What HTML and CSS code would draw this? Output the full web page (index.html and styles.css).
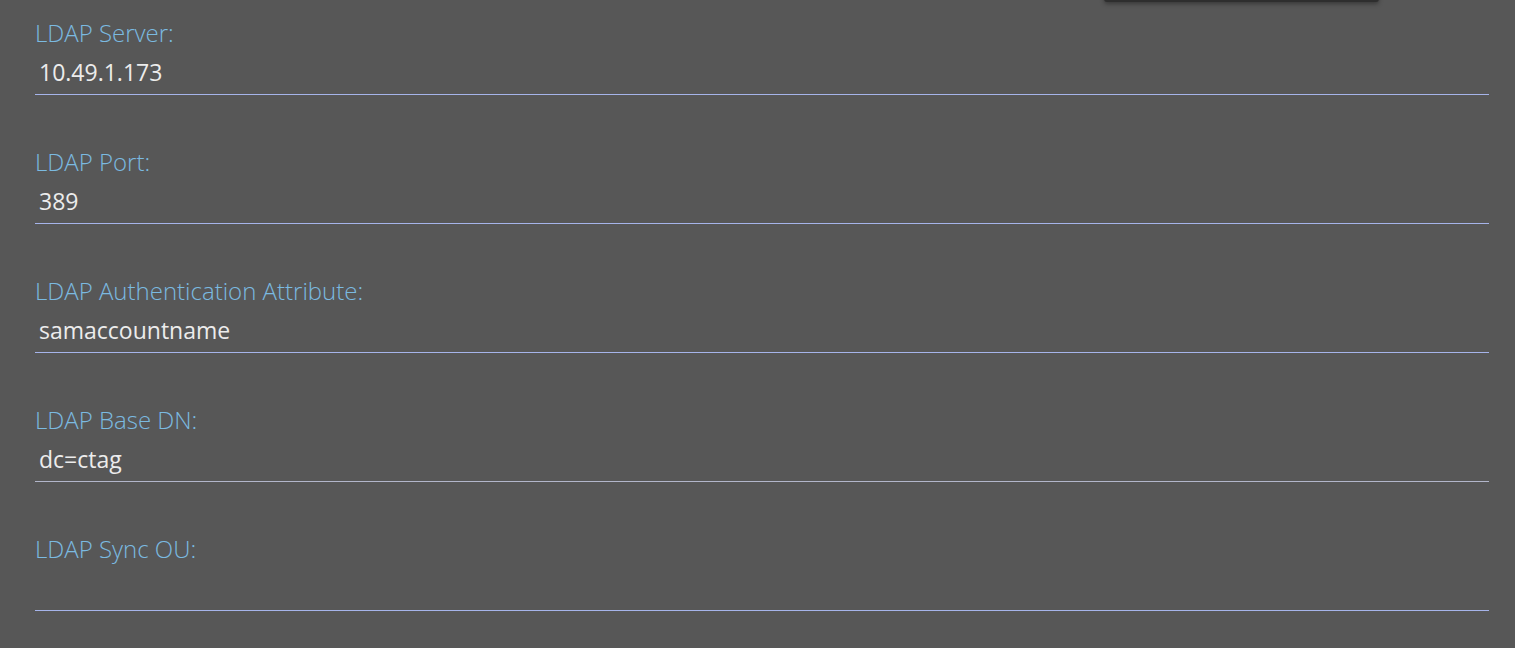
FILE: index.html
```html
<!DOCTYPE html>
<html>
<head>
<meta charset="utf-8">
<link rel="stylesheet" href="styles.css">
</head>
<body>
<div class="menu-edge"></div>
<form class="form">
  <div class="field">
    <label class="label">LDAP Server:</label>
    <div class="input">10.49.1.173</div>
  </div>
  <div class="field">
    <label class="label">LDAP Port:</label>
    <div class="input">389</div>
  </div>
  <div class="field">
    <label class="label">LDAP Authentication Attribute:</label>
    <div class="input">samaccountname</div>
  </div>
  <div class="field">
    <label class="label">LDAP Base DN:</label>
    <div class="input input-muted">dc=ctag</div>
  </div>
  <div class="field">
    <label class="label">LDAP Sync OU:</label>
    <div class="input"></div>
  </div>
</form>
</body>
</html>
```

FILE: styles.css
```css
html, body {
  margin: 0;
  padding: 0;
  background: #575757;
  height: 100%;
  overflow: hidden;
}
body {
  font-family: "Open Sans", "Liberation Sans", sans-serif;
  position: relative;
}
.menu-edge {
  position: absolute;
  left: 1104px;
  top: -40px;
  width: 275px;
  height: 42px;
  background: #2e2e2e;
  border-radius: 3px;
  box-shadow: 0 2px 4px rgba(0,0,0,0.35);
}
.form {
  display: flex;
  flex-direction: column;
  gap: 51px;
  padding: 17px 26px 0 35px;
}
.field {
  display: flex;
  flex-direction: column;
}
.label {
  display: block;
  font-size: 24px;
  line-height: 32px;
  font-weight: 300;
  color: #7bbae0;
}
.input {
  font-size: 23px;
  line-height: 32px;
  height: 32px;
  color: #ececec;
  padding: 7px 4px 6px;
  border-bottom: 1px solid #a6b4ea;
}
.input-muted {
  border-bottom-color: #b2b6ca;
}
```
